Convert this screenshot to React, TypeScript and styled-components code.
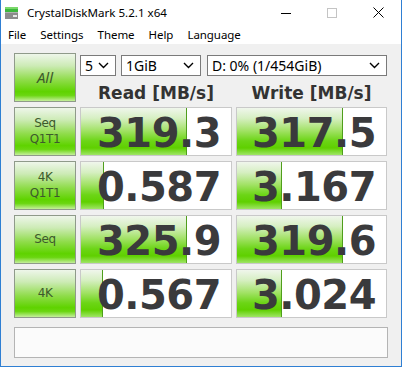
import React from "react";
import styled, { createGlobalStyle } from "styled-components";

const Global = createGlobalStyle`
  html, body { margin: 0; padding: 0; background: #ffffff; }
  * { box-sizing: border-box; }
`;

const Window = styled.div`
  width: 402px;
  height: 367px;
  display: flex;
  flex-direction: column;
  border: 1px solid #2f7fd3;
  border-top: none;
  background: #ffffff;
  font-family: "Noto Sans", "Open Sans", sans-serif;
  overflow: hidden;
`;

const TitleBar = styled.div`
  height: 25px;
  display: flex;
  align-items: center;
  padding-left: 3px;
  color: #000;
`;

const Title = styled.span`
  font-family: "Noto Sans", sans-serif;
  font-size: 11.6px;
  margin-left: 7px;
  flex: 1;
`;

const Controls = styled.div`
  display: flex;
  align-items: center;
  height: 100%;
`;

const Ctrl = styled.div`
  width: 46px;
  height: 100%;
  display: flex;
  align-items: center;
  justify-content: center;
`;

const MenuBar = styled.div`
  height: 20px;
  display: flex;
  align-items: center;
  padding-left: 0px;
  font-family: "Noto Sans", sans-serif;
  font-size: 11.5px;
  letter-spacing: -0.05px;
  color: #000;
  border-bottom: 1px solid #f0f0f0;
`;

const MenuItem = styled.span`
  padding: 0 7px;
`;

const Content = styled.div`
  flex: 1;
  background: #f0f0f0;
  padding: 8px 13px 7px 13px;
  display: flex;
  flex-direction: column;
  gap: 9px;
`;

const Grid = styled.div`
  display: grid;
  grid-template-columns: 62px 152px 151px;
  grid-auto-rows: 49px;
  column-gap: 4px;
  row-gap: 5px;
`;

const GreenButton = styled.div<{ $italic?: boolean }>`
  border: 1px solid #8f9a8a;
  background: linear-gradient(
    to bottom,
    #eef6ea 0%,
    #cdebb6 25%,
    #8fdc4a 55%,
    #5fd300 80%,
    #6ad610 88%,
    #c5ef9c 100%
  );
  display: flex;
  flex-direction: column;
  align-items: center;
  justify-content: center;
  color: #3d5a2c;
  font-family: ${(p) => (p.$italic ? '"Noto Sans", "Open Sans", sans-serif' : '"DejaVu Sans", sans-serif')};
  font-size: ${(p) => (p.$italic ? "15px" : "12px")};
  font-style: ${(p) => (p.$italic ? "italic" : "normal")};
  letter-spacing: ${(p) => (p.$italic ? "0" : "-0.4px")};
  line-height: 16px;
  padding-bottom: 1px;
`;

const TopRight = styled.div`
  grid-column: 2 / 4;
  display: grid;
  grid-template-columns: 152px 151px;
  column-gap: 4px;
  grid-template-rows: 23px 26px;
  padding-top: 2px;
`;

const SelectRow = styled.div`
  grid-column: 1 / 3;
  display: flex;
  height: 21px;
`;

const Select = styled.div<{ $w: number; $ml: number }>`
  width: ${(p) => p.$w}px;
  margin-left: ${(p) => p.$ml}px;
  height: 21px;
  border: 1px solid #7a7a7a;
  background: #fff;
  display: flex;
  align-items: center;
  padding: 0 6px 0 4px;
  font-size: 14px;
  color: #000;
`;

const SelectText = styled.span`
  flex: 1;
  white-space: nowrap;
`;

const Header = styled.div`
  display: flex;
  align-items: center;
  justify-content: center;
  font-family: "DejaVu Sans", sans-serif;
  font-weight: bold;
  font-size: 17px;
  color: #333;
  padding-top: 3px;
`;

const ValueCell = styled.div`
  position: relative;
  border: 1px solid #c9c9c9;
  background: #ffffff;
  display: flex;
  align-items: center;
  justify-content: flex-end;
  padding-right: 10px;
  overflow: hidden;
`;

const Bar = styled.div`
  position: absolute;
  left: 0;
  top: 0;
  bottom: 0;
  border-right: 1px solid #4f9e1c;
  background: linear-gradient(
    to bottom,
    #f0f6ec 0%,
    #d6efc2 22%,
    #a2e266 48%,
    #6cd516 70%,
    #5fd000 85%,
    #9fe566 100%
  );
`;

const Value = styled.span`
  position: relative;
  font-family: "DejaVu Sans", sans-serif;
  font-weight: bold;
  font-size: 40px;
  color: #3a3a3c;
  letter-spacing: -0.5px;
  line-height: 1;
  padding-top: 2px;
`;

const Comment = styled.div`
  height: 31px;
  width: 374px;
  border: 1px solid #b4b4b4;
  background: #fbfbfb;
`;

const Chevron = () => (
  <svg width="11" height="7" viewBox="0 0 11 7">
    <path d="M1 1 L5.5 5.5 L10 1" fill="none" stroke="#000" strokeWidth="1.4" />
  </svg>
);

const AppIcon = () => (
  <svg width="16" height="16" viewBox="0 0 16 16">
    <rect x="1" y="2" width="13" height="5" fill="#3cb83c" />
    <rect x="1" y="2" width="13" height="2" fill="#7ad86a" />
    <rect x="1" y="7" width="13" height="7" fill="#8c8c8c" />
    <rect x="1" y="7" width="13" height="1" fill="#b0b0b0" />
    <rect x="9" y="10" width="4" height="2" fill="#e8e8e8" />
  </svg>
);

const rows = [
  { label: ["Seq", "Q1T1"], read: "319.3", rw: 106, write: "317.5", ww: 106 },
  { label: ["4K", "Q1T1"], read: "0.587", rw: 23, write: "3.167", ww: 45 },
  { label: ["Seq"], read: "325.9", rw: 106, write: "319.6", ww: 106 },
  { label: ["4K"], read: "0.567", rw: 22, write: "3.024", ww: 45 },
];

export default function App() {
  return (
    <>
      <Global />
      <Window>
        <TitleBar>
          <AppIcon />
          <Title>CrystalDiskMark 5.2.1 x64</Title>
          <Controls>
            <Ctrl>
              <svg width="10" height="10" viewBox="0 0 10 10">
                <path d="M0 5.5 H10" stroke="#000" strokeWidth="1" />
              </svg>
            </Ctrl>
            <Ctrl>
              <svg width="10" height="10" viewBox="0 0 10 10">
                <rect x="0.5" y="0.5" width="9" height="9" fill="none" stroke="#c4c4c4" strokeWidth="1" />
              </svg>
            </Ctrl>
            <Ctrl>
              <svg width="11" height="11" viewBox="0 0 11 11">
                <path d="M0.5 0.5 L10.5 10.5 M10.5 0.5 L0.5 10.5" stroke="#000" strokeWidth="1" />
              </svg>
            </Ctrl>
          </Controls>
        </TitleBar>
        <MenuBar>
          <MenuItem>File</MenuItem>
          <MenuItem>Settings</MenuItem>
          <MenuItem>Theme</MenuItem>
          <MenuItem>Help</MenuItem>
          <MenuItem>Language</MenuItem>
        </MenuBar>
        <Content>
          <Grid>
            <GreenButton $italic>All</GreenButton>
            <TopRight>
              <SelectRow>
                <Select $w={36} $ml={0}>
                  <SelectText>5</SelectText>
                  <Chevron />
                </Select>
                <Select $w={80} $ml={5}>
                  <SelectText>1GiB</SelectText>
                  <Chevron />
                </Select>
                <Select $w={180} $ml={6}>
                  <SelectText>D: 0% (1/454GiB)</SelectText>
                  <Chevron />
                </Select>
              </SelectRow>
              <Header>Read [MB/s]</Header>
              <Header>Write [MB/s]</Header>
            </TopRight>
            {rows.map((r) => (
              <React.Fragment key={r.read + r.write}>
                <GreenButton>
                  {r.label.map((l) => (
                    <span key={l}>{l}</span>
                  ))}
                </GreenButton>
                <ValueCell>
                  <Bar style={{ width: r.rw }} />
                  <Value>{r.read}</Value>
                </ValueCell>
                <ValueCell>
                  <Bar style={{ width: r.ww }} />
                  <Value>{r.write}</Value>
                </ValueCell>
              </React.Fragment>
            ))}
          </Grid>
          <Comment />
        </Content>
      </Window>
    </>
  );
}
